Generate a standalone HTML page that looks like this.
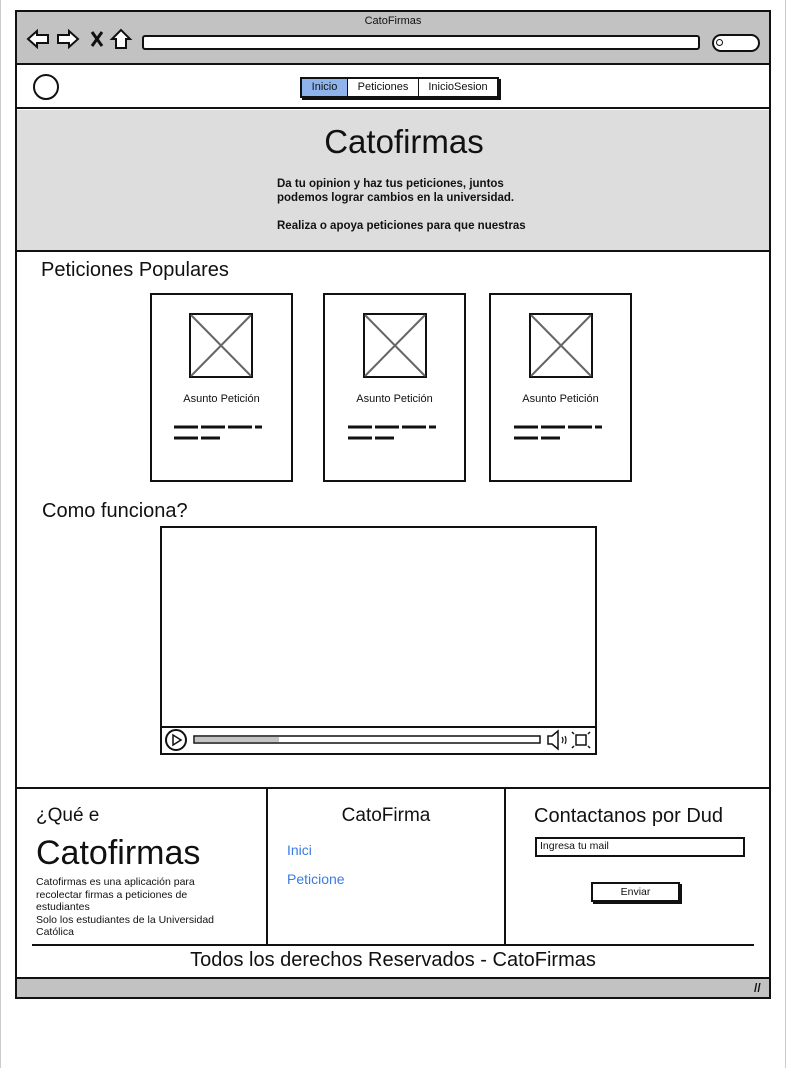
<!DOCTYPE html>
<html><head><meta charset="utf-8"><style>
*{margin:0;padding:0;box-sizing:border-box}
body{width:786px;height:1068px;background:#fff;position:relative;overflow:hidden;font-family:"Liberation Sans",sans-serif;color:#111}
.a{position:absolute}
.b{border:2px solid #111}
</style></head><body>
<div class="a" style="left:0;top:0;width:786px;height:1068px;border-left:1px solid #ccc;border-right:1px solid #ccc"></div>
<div class="a b" style="left:15px;top:10px;width:756px;height:989px;background:#fff"></div>
<div class="a" style="left:17px;top:12px;width:752px;height:53px;background:#c2c2c2;border-bottom:2px solid #111"></div>
<div class="a" style="left:0;width:786px;top:15px;text-align:center;font-size:11px">CatoFirmas</div>
<svg class="a" style="left:26px;top:28px" width="110" height="22" viewBox="0 0 110 22" fill="#fff" stroke="#111" stroke-width="2">
<path d="M2 11 L11 3 L11 7 L22 7 L22 15 L11 15 L11 19 Z"/>
<path d="M52 11 L43 3 L43 7 L32 7 L32 15 L43 15 L43 19 Z"/>
<path d="M66 4 L76 18 M76 4 L66 18" stroke-width="3"/>
<path d="M95 2 L86 11 L90 11 L90 20 L100 20 L100 11 L104 11 Z"/>
</svg>
<div class="a b" style="left:142px;top:35px;width:558px;height:15px;background:#fff;border-radius:3px"></div>
<div class="a b" style="left:712px;top:34px;width:48px;height:18px;background:#fff;border-radius:9px"></div>
<div class="a" style="left:716px;top:39px;width:7px;height:7px;border:1.5px solid #111;border-radius:50%"></div>
<div class="a" style="left:17px;top:65px;width:752px;height:44px;background:#fff;border-bottom:2px solid #111"></div>
<div class="a b" style="left:33px;top:74px;width:26px;height:26px;border-radius:50%"></div>
<div class="a" style="left:300px;top:77px;height:21px;display:flex;border:2px solid #111;box-shadow:2px 2px 0 #111;font-size:11px">
<div style="width:45px;background:#8fb4ec;text-align:center;line-height:17px">Inicio</div>
<div style="width:71px;border-left:1px solid #111;text-align:center;line-height:17px">Peticiones</div>
<div style="width:79px;border-left:1px solid #111;text-align:center;line-height:17px">InicioSesion</div>
</div>
<div class="a" style="left:17px;top:110px;width:752px;height:142px;background:#ddd;border-bottom:2px solid #111"></div>
<div class="a" style="left:0;width:808px;top:123px;text-align:center;font-size:33px">Catofirmas</div>
<div class="a" style="left:277px;top:177px;font-size:11.5px;font-weight:bold;line-height:14px">Da tu opinion y haz tus peticiones, juntos<br>podemos lograr cambios en la universidad.<br><br>Realiza o apoya peticiones para que nuestras</div>
<div class="a" style="left:41px;top:259px;font-size:20px">Peticiones Populares</div>
<div class="a" style="left:150px;top:293px;width:143px;height:189px;border:2px solid #111"></div>
<div class="a" style="left:323px;top:293px;width:143px;height:189px;border:2px solid #111"></div>
<div class="a" style="left:489px;top:293px;width:143px;height:189px;border:2px solid #111"></div>
<svg class="a" style="left:0;top:0" width="786" height="500">
<g fill="none" stroke="#111">
<rect x="190" y="314" width="62" height="63" stroke-width="2"/>
<rect x="364" y="314" width="62" height="63" stroke-width="2"/>
<rect x="530" y="314" width="62" height="63" stroke-width="2"/>
</g>
<g stroke="#666" stroke-width="2">
<path d="M191 315L251 376M251 315L191 376"/>
<path d="M365 315L425 376M425 315L365 376"/>
<path d="M531 315L591 376M591 315L531 376"/>
</g>
<g stroke="#111" stroke-width="3" stroke-dasharray="24 3">
<path d="M174 427H262M174 438H220"/>
<path d="M348 427H436M348 438H394"/>
<path d="M514 427H602M514 438H560"/>
</g>
</svg>
<div class="a" style="left:150px;width:143px;top:393px;text-align:center;font-size:11px">Asunto Petición</div>
<div class="a" style="left:323px;width:143px;top:393px;text-align:center;font-size:11px">Asunto Petición</div>
<div class="a" style="left:489px;width:143px;top:393px;text-align:center;font-size:11px">Asunto Petición</div>
<div class="a" style="left:42px;top:500px;font-size:20px">Como funciona?</div>
<div class="a b" style="left:160px;top:526px;width:437px;height:229px"></div>
<div class="a" style="left:161px;top:726px;width:435px;height:2px;background:#111"></div>
<svg class="a" style="left:160px;top:726px" width="437" height="28">
<circle cx="16" cy="14" r="10" fill="none" stroke="#111" stroke-width="2"/>
<path d="M13 9L21 14L13 19Z" fill="none" stroke="#111" stroke-width="1.5"/>
<rect x="34" y="10" width="346" height="7" fill="#fff" stroke="#111" stroke-width="1.5"/>
<rect x="35" y="11" width="84" height="5" fill="#c4c4c4"/>
<path d="M388 10H392L398 5V23L392 18H388Z" fill="none" stroke="#111" stroke-width="1.5"/>
<path d="M402 11Q404 14 402 17M405 10Q407 14 405 18" fill="none" stroke="#111" stroke-width="1.2"/>
<rect x="416" y="9" width="10" height="10" fill="none" stroke="#111" stroke-width="1.5"/>
<path d="M412 6L414 8M430 6L428 8M412 22L414 20M430 22L428 20" stroke="#111" stroke-width="1.5"/>
</svg>
<div class="a" style="left:17px;top:787px;width:752px;height:2px;background:#111"></div>
<div class="a" style="left:266px;top:789px;width:2px;height:156px;background:#111"></div>
<div class="a" style="left:504px;top:789px;width:2px;height:156px;background:#111"></div>
<div class="a" style="left:32px;top:944px;width:722px;height:2px;background:#111"></div>
<div class="a" style="left:36px;top:805px;font-size:19px">¿Qué e</div>
<div class="a" style="left:36px;top:834px;font-size:34px">Catofirmas</div>
<div class="a" style="left:36px;top:876px;font-size:10.5px;line-height:12.5px">Catofirmas es una aplicación para<br>recolectar firmas a peticiones de<br>estudiantes<br>Solo los estudiantes de la Universidad<br>Católica</div>
<div class="a" style="left:268px;width:236px;top:805px;text-align:center;font-size:19px">CatoFirma</div>
<div class="a" style="left:287px;top:842px;font-size:14px;color:#3c7be0">Inici</div>
<div class="a" style="left:287px;top:871px;font-size:14px;color:#3c7be0">Peticione</div>
<div class="a" style="left:534px;top:805px;font-size:20px">Contactanos por Dud</div>
<div class="a b" style="left:535px;top:837px;width:210px;height:20px;font-size:10.5px;padding:1px 3px">Ingresa tu mail</div>
<div class="a b" style="left:591px;top:882px;width:89px;height:20px;font-size:10.5px;text-align:center;line-height:16px;box-shadow:2px 2px 0 #111">Enviar</div>
<div class="a" style="left:0;width:786px;top:949px;text-align:center;font-size:20px">Todos los derechos Reservados - CatoFirmas</div>
<div class="a" style="left:17px;top:977px;width:752px;height:20px;background:#c2c2c2;border-top:2px solid #111"></div>
<div class="a" style="left:754px;top:981px;font-size:12px;font-weight:bold">//</div>
</body></html>
